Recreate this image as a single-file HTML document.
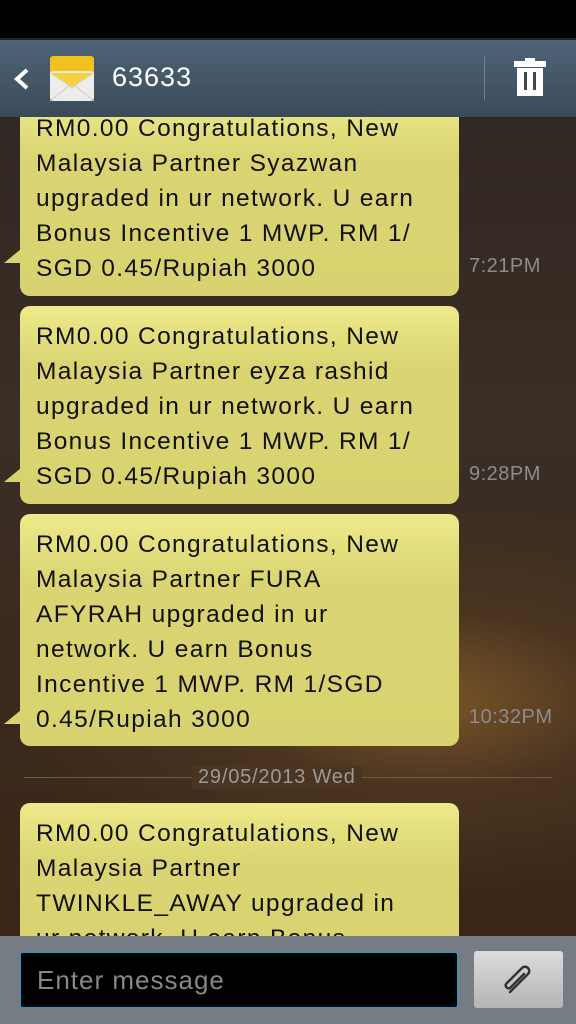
<!DOCTYPE html>
<html><head><style>
*{margin:0;padding:0;box-sizing:border-box}
body{width:576px;height:1024px;overflow:hidden;position:relative;font-family:"Liberation Sans",sans-serif;
background:radial-gradient(ellipse 420px 200px at 430px 700px,#7a5628 0%,#4a3420 45%,transparent 100%),linear-gradient(#2e2620 0%,#3a2e26 40%,#3b2a1c 70%,#3a2414 100%);}
.top{position:absolute;left:0;top:0;width:576px;height:40px;background:#000;border-bottom:2px solid #222}
.bar{position:absolute;left:0;top:40px;width:576px;height:77px;background:linear-gradient(#4f6478,#3a4a58)}
.bubble{position:absolute;left:20px;width:439px;border-radius:10px;background:linear-gradient(#eee98a,#dad572 30%,#d8d370);color:#111;font-size:24.5px;line-height:35px;padding:0 0 0 16px;letter-spacing:1.35px;white-space:nowrap}
.tail{position:absolute;left:-16px;width:0;height:0;border-top:14px solid transparent;border-right:17px solid #d8d370}
.time{position:absolute;color:#8c8c8c;font-size:20px;letter-spacing:0.5px}
</style></head><body>
<div class="top"></div>
<div class="bar">
 <svg style="position:absolute;left:12px;top:27px" width="20" height="24"><path d="M15 3 L5 12 L15 21" stroke="#fff" stroke-width="4" fill="none"/></svg>
 <svg style="position:absolute;left:48px;top:15px" width="52" height="48">
  <rect x="2" y="1" width="44" height="30" rx="3" fill="#f2c21c"/>
  <rect x="2" y="16" width="44" height="30" rx="3" fill="#ececec"/>
  <path d="M2 18 L24 33 L46 18" fill="#f5d040" stroke="#ddd"/>
  <path d="M2 46 L22 30 M46 46 L26 30" stroke="#ccc"/>
 </svg>
 <div style="position:absolute;left:112px;top:22px;color:#fff;font-size:27px;letter-spacing:1px">63633</div>
 <div style="position:absolute;left:484px;top:16px;width:1px;height:44px;background:#6f8090"></div>
 <svg style="position:absolute;left:512px;top:18px" width="40" height="40">
  <rect x="2" y="3" width="32" height="6" fill="#fff"/><rect x="13" y="0" width="10" height="4" fill="#fff"/>
  <rect x="5" y="10" width="26" height="28" fill="#fff"/><rect x="12" y="14" width="3" height="18" fill="#444"/><rect x="21" y="14" width="3" height="18" fill="#444"/>
 </svg>
</div>
<div style="position:absolute;left:0;top:117px;width:576px;height:819px;overflow:hidden">
 <div class="bubble" style="top:-18px;height:197px;padding-top:12px">RM0.00 Congratulations, New<br>Malaysia Partner Syazwan<br>upgraded in ur network. U earn<br>Bonus Incentive 1 MWP. RM 1/<br>SGD 0.45/Rupiah 3000<div class="tail" style="top:150px"></div></div>
 <div class="time" style="left:469px;top:138px">7:21PM</div>
 <div class="bubble" style="top:189px;height:198px;padding-top:13px">RM0.00 Congratulations, New<br>Malaysia Partner eyza rashid<br>upgraded in ur network. U earn<br>Bonus Incentive 1 MWP. RM 1/<br>SGD 0.45/Rupiah 3000<div class="tail" style="top:162px"></div></div>
 <div class="time" style="left:469px;top:346px">9:28PM</div>
 <div class="bubble" style="top:397px;height:232px;padding-top:13px">RM0.00 Congratulations, New<br>Malaysia Partner FURA<br>AFYRAH upgraded in ur<br>network. U earn Bonus<br>Incentive 1 MWP. RM 1/SGD<br>0.45/Rupiah 3000<div class="tail" style="top:196px"></div></div>
 <div class="time" style="left:469px;top:589px">10:32PM</div>
 <div style="position:absolute;left:24px;top:660px;width:528px;height:1px;background:#6a5a4a"></div>
 <div style="position:absolute;left:192px;top:649px;padding:0 6px;color:#999;font-size:20px;letter-spacing:0.8px;background:#4a3522">29/05/2013 Wed</div>
 <div class="bubble" style="top:686px;height:200px;padding-top:13px">RM0.00 Congratulations, New<br>Malaysia Partner<br>TWINKLE_AWAY upgraded in<br>ur network. U earn Bonus</div>
</div>
<div style="position:absolute;left:0;top:936px;width:576px;height:88px;background:#757c84">
 <div style="position:absolute;left:20px;top:16px;width:438px;height:56px;background:#000;border:1px solid #1aa0d0;border-radius:3px;color:#888;font-size:26px;letter-spacing:1px;padding:12px 0 0 16px">Enter message</div>
 <div style="position:absolute;left:474px;top:15px;width:89px;height:57px;border-radius:3px;background:linear-gradient(#dcdcdc,#b4b4b4)">
  <svg style="position:absolute;left:26px;top:11px" width="38" height="36"><path d="M10 30 L28 12 a4 4 0 0 0 -6 -6 L6 22 a3 3 0 0 0 4 4 L24 12" stroke="#333" stroke-width="2.5" fill="none" stroke-linecap="round"/></svg>
 </div>
</div>
</body></html>
